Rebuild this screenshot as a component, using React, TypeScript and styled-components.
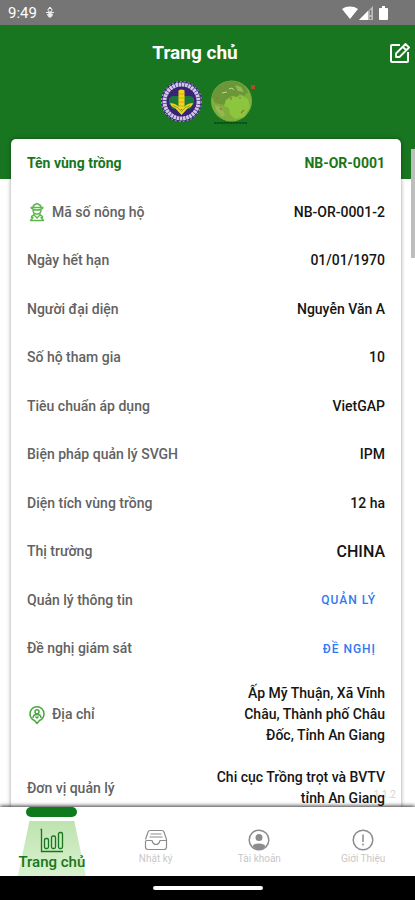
import React from 'react';
import styled, { createGlobalStyle, css } from 'styled-components';

const GlobalStyle = createGlobalStyle`
  *, *::before, *::after { box-sizing: border-box; }
  html, body { margin: 0; padding: 0; }
  body { font-family: Roboto, "Noto Sans", sans-serif; background: #fff; color: #222; }
  button { font: inherit; color: inherit; border: 0; background: none; padding: 0; cursor: pointer; }
`;

const Screen = styled.div`
  display: flex;
  flex-direction: column;
  height: 100vh;
  overflow: hidden;
`;

const StatusBar = styled.div`
  display: flex;
  align-items: center;
  justify-content: space-between;
  flex: none;
  height: 25px;
  padding: 0 27px 0 8px;
  background: #757575;
  color: #fff;
  font-size: 15px;
`;

const StatusGroup = styled.div<{ $gap: number }>`
  display: flex;
  align-items: center;
  gap: ${(p) => p.$gap}px;
`;

const Content = styled.main`
  position: relative;
  flex: 1;
  min-height: 0;
  overflow: hidden;
  background: linear-gradient(#187620 154px, #fff 154px);
`;

const Header = styled.header`
  display: grid;
  grid-template-columns: 1fr 20px;
  align-items: center;
  height: 55px;
  padding: 0 5px 0 0;
  color: #fff;
`;

const Title = styled.h1`
  margin: 0;
  font-size: 19px;
  font-weight: 700;
  line-height: 24px;
  text-align: center;
`;

const EditButton = styled.button`
  display: flex;
`;

const Logos = styled.div`
  display: flex;
  justify-content: center;
  gap: 6px;
  height: 59px;
`;

const Card = styled.section`
  margin: 0 14px 0 11px;
  padding: 0 16px;
  border-radius: 5px 5px 0 0;
  background: #fff;
  box-shadow: 0 0 4px rgba(0, 0, 0, 0.4);
`;

const Fields = styled.dl`
  margin: 0;
`;

const Row = styled.div<{ $accent?: boolean }>`
  display: flex;
  align-items: center;
  justify-content: space-between;
  min-height: 48px;
  padding: 11px 0 10px;
  font-size: 14px;
  font-weight: 500;
  line-height: 21px;
  color: #151515;

  &:nth-child(even) { min-height: 49px; }

  ${(p) => p.$accent && css`
    color: #187620;
    font-weight: 700;
  `}
`;

const Label = styled.dt<{ $accent?: boolean }>`
  display: flex;
  align-items: center;
  gap: 5px;
  color: ${(p) => (p.$accent ? 'inherit' : '#626262')};
`;

const Value = styled.dd<{ $large?: boolean }>`
  max-width: 48%;
  margin: 0;
  font-size: ${(p) => (p.$large ? 16 : 14)}px;
  text-align: right;
`;

const TextButton = styled.button`
  padding: 0 9px;
  color: #3478f0;
  font-size: 12px;
  font-weight: 500;
  letter-spacing: 1px;
`;

const ScrollThumb = styled.div`
  position: absolute;
  top: 124px;
  right: 0;
  width: 4px;
  height: 109px;
  background: #bdbdbd;
`;

const Version = styled.small`
  position: absolute;
  right: 19px;
  bottom: 5px;
  color: #d4d4d4;
  font-size: 10px;
  line-height: 14px;
`;

const TabBar = styled.nav`
  position: relative;
  display: grid;
  grid-template-columns: repeat(4, 1fr);
  flex: none;
  height: 69px;
  background: #fff;
  box-shadow: 0 -1px 4px rgba(0, 0, 0, 0.8);
`;

const Tab = styled.button`
  position: relative;
  display: flex;
  flex-direction: column;
  align-items: center;
  padding-top: 21px;
  color: #8c8c8c;
`;

const TabLabel = styled.span<{ $active?: boolean }>`
  position: relative;
  color: ${(p) => (p.$active ? '#187620' : '#c8c8c8')};
  font-size: ${(p) => (p.$active ? 15 : 10)}px;
  font-weight: ${(p) => (p.$active ? 500 : 400)};
  line-height: ${(p) => (p.$active ? 18 : 14)}px;
`;

const Pill = styled.span`
  position: absolute;
  top: 0;
  width: 51px;
  height: 10px;
  border-radius: 5px;
  background: #0d7a1c;
`;

const Beam = styled.span`
  position: absolute;
  top: 14px;
  bottom: 0;
  width: 68px;
  background: linear-gradient(#bfe3b0, #d9f2cf);
  clip-path: polygon(17% 0, 83% 0, 100% 100%, 0 100%);
`;

const TabIcon = styled.svg`
  position: relative;
  flex: none;
`;

const SystemBar = styled.div`
  display: flex;
  align-items: center;
  justify-content: center;
  flex: none;
  height: 24px;
  background: #000;
`;

const HomeIndicator = styled.div`
  width: 110px;
  height: 4px;
  border-radius: 2px;
  background: #fff;
`;

const DebugIcon = () => (
  <svg width="10" height="13" viewBox="0 0 10 13" fill="none" stroke="#eee" aria-hidden="true">
    <path d="M5 1v2" strokeWidth="2" />
    <circle cx="5" cy="4" r="2" />
    <path d="M1 6.500h8M2 9l3-2.500L8 9M2.500 9.500Q5 13 7.500 9.500" />
    <circle cx="5" cy="9" r="1.500" fill="#eee" />
  </svg>
);

const WifiIcon = () => (
  <svg width="16" height="13" viewBox="0 0 16 13" aria-hidden="true">
    <path d="M0 3C4.500-.3 11.500-.3 16 3L8 13z" fill="#fff" />
  </svg>
);

const SignalIcon = () => (
  <svg width="14" height="14" viewBox="0 0 14 14" aria-hidden="true">
    <path d="M0 14 14 0v14z" fill="#bbb" />
    <path d="M0 14 9 5v9z" fill="#fff" />
    <path d="M11.500 4v5M11.500 11v2" stroke="#757575" strokeWidth="1.500" />
  </svg>
);

const BatteryIcon = () => (
  <svg width="9" height="14" viewBox="0 0 9 14" aria-hidden="true">
    <path d="M3 0h3v2h2q1 0 1 1v10q0 1-1 1H1q-1 0-1-1V3q0-1 1-1h2z" fill="#fff" />
  </svg>
);

const EditIcon = () => (
  <svg width="20" height="20" viewBox="0 0 20 20" fill="none" stroke="#fff" strokeWidth="2" strokeLinejoin="round" aria-hidden="true">
    <path d="M10 2H2q-1 0-1 1v15q0 1 1 1h15q1 0 1-1V9" />
    <path d="M6 14v-3.500L15.500 1 19 4.500 9.500 14zM13 4l3 3" strokeWidth="1.800" />
  </svg>
);

const InstituteLogo = () => (
  <svg width="43" height="43" viewBox="0 0 43 43" role="img" aria-label="Institute">
    <circle cx="21.500" cy="21.500" r="20.500" fill="#35206f" />
    <circle cx="21.500" cy="21.500" r="20" fill="none" stroke="#a9a2cc" strokeDasharray="2 2" />
    <circle cx="21.500" cy="21.500" r="17" fill="none" stroke="#cfc7e6" strokeWidth="4" strokeDasharray="2.600 .6" />
    <circle cx="21.500" cy="21.500" r="14.500" fill="#392377" />
    <path d="M9 19q1-3 5-3h15q4 0 5 3v5l-4 5H13l-4-5z" fill="#19783a" />
    <path d="M18.500 10.500q3-2 6 0V29h-6z" fill="#f3d51b" />
    <path d="M10 23q7 0 11.500 7Q26 23 33 23q-1 4-5 5l-6.500 7L15 28q-4-1-5-5z" fill="#f0d21a" />
    <path d="M18.500 14h6M18.500 18h6M18.500 22h6M18.500 26h6" stroke="#c8a616" strokeWidth=".8" />
    <path d="M13 25.500q5 1 8.500 6 3.500-5 8.500-6" fill="none" stroke="#7d9a25" strokeWidth=".8" />
  </svg>
);

const GlobeLogo = () => (
  <svg width="46" height="46" viewBox="0 0 46 46" role="img" aria-label="Globe">
    <circle cx="22.500" cy="21" r="20.500" fill="#7fae3c" />
    <path d="M10 5Q22-3 35 5l4 7-4 4-5-2-2 5-7 1-6 5-9-2-3-6q0-7 7-12z" fill="#6a9838" />
    <path d="M17 20l6-4 5 1 4-2 7 4 2 8-6 10-9 2-5-5-1-6-5-2z" fill="#8cc63f" />
    <path d="M6 25l7 3 3 7-2 2Q7 33 6 25zM26 5l6 2 3 5-6-1z" fill="#93b955" />
    <path d="M7 18h3M15 13h2M22 17v3M30 18h2M32 33l3-3M11 28l2 2" stroke="#a8683c" strokeWidth="1.200" />
    <path d="M20 9l3-1 2 2M13 13l5-1" stroke="#c6d690" fill="none" />
    <path d="M42 5h4v4h-4z" fill="#b04a2c" />
    <path d="M5 43h33" stroke="#0d4f18" strokeWidth="2" strokeDasharray="2.500 .6" />
    <path d="M14 46h16" stroke="#126020" strokeDasharray="2 1" />
  </svg>
);

const FarmerIcon = () => (
  <svg width="20" height="20" viewBox="0 0 20 20" fill="none" stroke="#5cb84a" strokeWidth="1.400" strokeLinejoin="round" aria-hidden="true">
    <path d="M6 5q0-2 4-3.500Q14 3 14 5M3.500 5.500h13M4 6q2 2 6 2t6-2M6 8q0 4 4 4t4-4M7 11.500v1.500q-3 1-2.500 2.500H6L3.500 18.500h13L14 15.500h1.500Q16 14 13 13v-1.500M7.500 13.500 10 16l2.500-2.500" />
  </svg>
);

const PinIcon = () => (
  <svg width="20" height="20" viewBox="0 0 20 20" fill="none" stroke="#4ba53f" strokeWidth="1.500" strokeLinejoin="round" aria-hidden="true">
    <path d="M10 18.500 7.500 15.500Q3 13.500 3 8.700a7 7 0 0 1 14 0Q17 13.500 12.500 15.500z" />
    <circle cx="10" cy="6.800" r="2" />
    <path d="M6 13q0-3.500 4-3.500t4 3.500M8.500 11.500l1.500 1.500 1.500-1.500" />
  </svg>
);

const ChartIcon = () => (
  <TabIcon width="24" height="25" viewBox="0 0 24 25" fill="none" stroke="#187620" strokeWidth="1.300" aria-hidden="true">
    <path d="M.5 1.500h1v22H23" />
    <rect x="4.500" y="10.500" width="4" height="10" rx="1.500" />
    <rect x="11.500" y="8" width="4" height="12.500" rx="1.500" />
    <rect x="18.500" y="4.500" width="4" height="16" rx="1.500" />
  </TabIcon>
);

const InboxIcon = () => (
  <TabIcon width="24" height="24" viewBox="0 0 24 24" fill="none" stroke="currentColor" strokeWidth="1.200" strokeLinejoin="round" aria-hidden="true">
    <path d="M1.500 11.500 4 4q.5-1.500 2-1.500h12q1.500 0 2 1.500l2.500 7.500V19q0 2.500-2.500 2.500H4Q1.500 21.500 1.500 19v-5.500q0-1 1-1H8q1 4 4 4t4-4h6.500M6.500 6h11M5.500 9h13" />
  </TabIcon>
);

const AccountIcon = () => (
  <TabIcon width="24" height="24" viewBox="0 0 24 24" aria-hidden="true">
    <circle cx="12" cy="12" r="9.800" fill="none" stroke="currentColor" strokeWidth="1.500" />
    <circle cx="12" cy="9.500" r="3.500" fill="currentColor" />
    <path d="M5.500 18q1.500-2.500 6.500-2.500t6.500 2.500Q16 21.500 12 21.500T5.500 18z" fill="currentColor" />
  </TabIcon>
);

const InfoIcon = () => (
  <TabIcon width="24" height="24" viewBox="0 0 24 24" fill="none" stroke="currentColor" strokeWidth="1.500" aria-hidden="true">
    <circle cx="12" cy="12" r="9.800" />
    <path d="M12 6.500v7.500M12 15.500v2" />
  </TabIcon>
);

type Field = {
  label: string;
  value?: string;
  action?: string;
  icon?: React.ReactNode;
  accent?: boolean;
  large?: boolean;
};

const fields: Field[] = [
  { label: 'Tên vùng trồng', value: 'NB-OR-0001', accent: true },
  { label: 'Mã số nông hộ', value: 'NB-OR-0001-2', icon: <FarmerIcon /> },
  { label: 'Ngày hết hạn', value: '01/01/1970' },
  { label: 'Người đại diện', value: 'Nguyễn Văn A' },
  { label: 'Số hộ tham gia', value: '10' },
  { label: 'Tiêu chuẩn áp dụng', value: 'VietGAP' },
  { label: 'Biện pháp quản lý SVGH', value: 'IPM' },
  { label: 'Diện tích vùng trồng', value: '12 ha' },
  { label: 'Thị trường', value: 'CHINA', large: true },
  { label: 'Quản lý thông tin', action: 'QUẢN LÝ' },
  { label: 'Đề nghị giám sát', action: 'ĐỀ NGHỊ' },
  { label: 'Địa chỉ', value: 'Ấp Mỹ Thuận, Xã Vĩnh Châu, Thành phố Châu Đốc, Tỉnh An Giang', icon: <PinIcon /> },
  { label: 'Đơn vị quản lý', value: 'Chi cục Trồng trọt và BVTV tỉnh An Giang' },
];

export default function App() {
  return (
    <Screen>
      <GlobalStyle />
      <StatusBar>
        <StatusGroup $gap={8}>
          <span>9:49</span>
          <DebugIcon />
        </StatusGroup>
        <StatusGroup $gap={6}>
          <StatusGroup $gap={1}>
            <WifiIcon />
            <SignalIcon />
          </StatusGroup>
          <BatteryIcon />
        </StatusGroup>
      </StatusBar>
      <Content>
        <Header>
          <Title>Trang chủ</Title>
          <EditButton type="button" aria-label="Chỉnh sửa"><EditIcon /></EditButton>
        </Header>
        <Logos>
          <InstituteLogo />
          <GlobeLogo />
        </Logos>
        <Card>
          <Fields>
            {fields.map((f) => (
              <Row key={f.label} $accent={f.accent}>
                <Label $accent={f.accent}>{f.icon}{f.label}</Label>
                <Value $large={f.large}>
                  {f.action ? <TextButton type="button">{f.action}</TextButton> : f.value}
                </Value>
              </Row>
            ))}
          </Fields>
        </Card>
        <Version>1.1.2</Version>
        <ScrollThumb />
      </Content>
      <TabBar>
        <Tab type="button" aria-current="page">
          <Pill />
          <Beam />
          <ChartIcon />
          <TabLabel $active>Trang chủ</TabLabel>
        </Tab>
        <Tab type="button"><InboxIcon /><TabLabel>Nhật ký</TabLabel></Tab>
        <Tab type="button"><AccountIcon /><TabLabel>Tài khoản</TabLabel></Tab>
        <Tab type="button"><InfoIcon /><TabLabel>Giới Thiệu</TabLabel></Tab>
      </TabBar>
      <SystemBar><HomeIndicator /></SystemBar>
    </Screen>
  );
}
